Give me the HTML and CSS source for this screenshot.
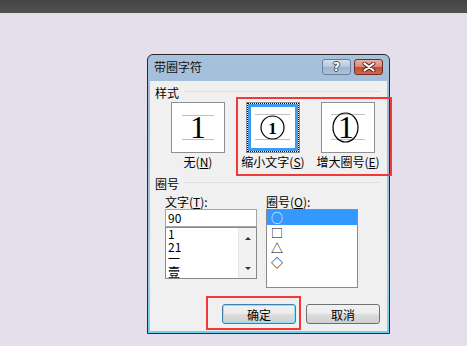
FILE: index.html
```html
<!DOCTYPE html>
<html lang="zh-CN">
<head>
    <meta charset="UTF-8">
    <meta name="viewport" content="width=device-width, initial-scale=1.0">
    <title>带圈字符</title>
    <link rel="stylesheet" href="styles.css">
</head>
<body>
    <div class="topbar"></div>

    <div class="stage">
        <div class="dialog">
            <div class="titlebar">
                <span class="title">带圈字符</span>
                <div class="caption-buttons">
                    <span class="cap-btn help">?</span>
                    <span class="cap-btn close">
                        <svg width="14" height="10" viewBox="0 0 14 10">
                            <path d="M2.5 1.5 L11.5 8.5 M11.5 1.5 L2.5 8.5" stroke="#5a2018" stroke-width="4" stroke-linecap="round"/>
                            <path d="M2.5 1.5 L11.5 8.5 M11.5 1.5 L2.5 8.5" stroke="#fff" stroke-width="2.2" stroke-linecap="round"/>
                        </svg>
                    </span>
                </div>
            </div>

            <div class="client">
                <div class="group-head">
                    <span>样式</span>
                    <i class="rule"></i>
                </div>

                <div class="styles">
                    <div class="style-opt">
                        <div class="style-box">
                            <svg width="52" height="49" viewBox="0 0 52 49">
                                <line x1="10" y1="12.5" x2="42" y2="12.5" stroke="#c0c0c0"/>
                                <line x1="10" y1="36.5" x2="42" y2="36.5" stroke="#c0c0c0"/>
                                <text x="26" y="35" text-anchor="middle" class="digit">1</text>
                            </svg>
                        </div>
                        <span class="opt-label">无(<u>N</u>)</span>
                    </div>
                    <div class="style-opt">
                        <div class="style-box selected">
                            <svg width="52" height="49" viewBox="0 0 52 49">
                                <rect x="2.5" y="2.5" width="47" height="44" fill="none" stroke="#3d9bef" stroke-width="3"/>
                                <line x1="8" y1="11.5" x2="43" y2="11.5" stroke="#c0c0c0"/>
                                <line x1="8" y1="36.5" x2="43" y2="36.5" stroke="#c0c0c0"/>
                                <circle cx="25.5" cy="24.5" r="11.5" fill="none" stroke="#000" stroke-width="1.2"/>
                                <text x="25.5" y="30.5" text-anchor="middle" class="digit small">1</text>
                            </svg>
                        </div>
                        <span class="opt-label">缩小文字(<u>S</u>)</span>
                    </div>
                    <div class="style-opt">
                        <div class="style-box">
                            <svg width="52" height="49" viewBox="0 0 52 49">
                                <line x1="9" y1="11.5" x2="43" y2="11.5" stroke="#c0c0c0"/>
                                <line x1="9" y1="36.5" x2="43" y2="36.5" stroke="#c0c0c0"/>
                                <ellipse cx="23.5" cy="24.5" rx="12.5" ry="14.5" fill="none" stroke="#000" stroke-width="1.2"/>
                                <text x="24" y="35" text-anchor="middle" class="digit">1</text>
                            </svg>
                        </div>
                        <span class="opt-label">增大圈号(<u>E</u>)</span>
                    </div>
                </div>

                <div class="group-head second">
                    <span>圈号</span>
                    <i class="rule"></i>
                </div>

                <div class="pickers">
                    <div class="picker">
                        <span class="field-label">文字(<u>T</u>):</span>
                        <div class="text-input">90</div>
                        <div class="listbox short">
                            <ul>
                                <li>1</li>
                                <li>21</li>
                                <li>一</li>
                                <li>壹</li>
                            </ul>
                            <div class="scrollbar">
                                <span class="arrow up"></span>
                                <span class="arrow down"></span>
                            </div>
                        </div>
                    </div>
                    <div class="picker">
                        <span class="field-label">圈号(<u>O</u>):</span>
                        <div class="listbox tall">
                            <ul>
                                <li class="selected">○</li>
                                <li>□</li>
                                <li>△</li>
                                <li>◇</li>
                            </ul>
                        </div>
                    </div>
                </div>

                <div class="actions">
                    <button class="btn default">确定</button>
                    <button class="btn">取消</button>
                </div>
            </div>
        </div>
    </div>

    <div class="mark mark-styles"></div>
    <div class="mark mark-ok"></div>
</body>
</html>
```

FILE: styles.css
```css
body {
    margin: 0;
    background-color: #e4dfeb;
    font-family: "Noto Sans CJK SC", "DejaVu Sans", sans-serif;
    font-size: 12px;
    color: #000;
}
.topbar {
    height: 13px;
    background: linear-gradient(#444, #525252);
}
.stage {
    padding: 41px 0 0 147px;
}
.dialog {
    width: 241px;
    height: 278px;
    border: 1px solid #2a2a2a;
    border-radius: 6px 6px 0 0;
    background: linear-gradient(#a8c2dd, #9dbad7 20%, #a3cbe4 80%, #6fd0ee);
    display: flex;
    flex-direction: column;
}
.titlebar {
    height: 26px;
    display: flex;
    justify-content: space-between;
    align-items: flex-start;
    padding: 4px 6px 0 6px;
    box-sizing: border-box;
}
.title {
    line-height: 16px;
    color: #111;
}
.caption-buttons {
    display: flex;
    gap: 3px;
}
.cap-btn {
    width: 27px;
    height: 14px;
    border-radius: 3px;
    display: flex;
    align-items: center;
    justify-content: center;
}
.help {
    border: 1px solid #65809f;
    background: linear-gradient(#d3e0ee, #b3c7de 50%, #9cb3cf 51%, #adc3dc);
    color: #fff;
    font-family: "DejaVu Sans", sans-serif;
    font-weight: bold;
    font-size: 12px;
    text-shadow: 1px 0 #3d4f66, -1px 0 #3d4f66, 0 1px #3d4f66, 0 -1px #3d4f66;
}
.close {
    border: 1px solid #6e2c22;
    background: linear-gradient(#e8b3a6, #d98572 50%, #c14a33 51%, #cf6a50);
}
.client {
    margin: 0 2px 2px 2px;
    flex: 1;
    background-color: #f0f0f0;
}
.group-head {
    display: flex;
    margin-top: 5px;
    padding-left: 5px;
    line-height: 14px;
}
.group-head.second {
    margin-top: 8px;
}
.rule {
    flex: 1;
    height: 1px;
    margin: 5px 7px 0 6px;
    background-color: #d5dfe5;
}
.styles {
    display: flex;
    gap: 21px;
    padding-left: 21px;
    margin-top: 2px;
}
.style-opt {
    width: 54px;
    display: flex;
    flex-direction: column;
    align-items: center;
}
.style-box {
    width: 52px;
    height: 49px;
    border: 1px solid #8f8f8f;
    background-color: #fff;
}
.style-box svg {
    display: block;
}
.style-box.selected {
    outline: 1px dotted #000;
    outline-offset: -2px;
}
.digit {
    font-family: "Liberation Serif", serif;
    font-size: 32px;
}
.digit.small {
    font-size: 17px;
    font-weight: bold;
}
.opt-label {
    white-space: nowrap;
    margin-top: 2px;
    line-height: 14px;
}
.pickers {
    display: flex;
    gap: 9px;
    padding-left: 15px;
    margin-top: 4px;
}
.picker {
    width: 92px;
    display: flex;
    flex-direction: column;
}
.field-label {
    line-height: 14px;
}
.text-input {
    height: 16px;
    border: 1px solid #a5a5a5;
    background-color: #fff;
    padding-left: 2px;
    line-height: 16px;
}
.listbox {
    border: 1px solid #8a8a8a;
    background-color: #fff;
    display: flex;
    box-sizing: border-box;
}
.listbox.short {
    height: 52px;
}
.listbox.tall {
    height: 79px;
}
.listbox ul {
    list-style-type: none;
    margin: 0;
    padding: 0;
    flex: 1;
}
.short li {
    line-height: 12.5px;
    padding-left: 2px;
}
.tall li {
    line-height: 15px;
    padding-left: 4px;
}
.tall li.selected {
    background-color: #3399ff;
    color: #fff;
}
.scrollbar {
    width: 17px;
    background-color: #f2f2f2;
    border-left: 1px solid #e6e6e6;
    display: flex;
    flex-direction: column;
    justify-content: space-between;
    align-items: center;
    padding: 9px 0 8px;
}
.arrow {
    width: 0;
    height: 0;
    border-left: 3px solid transparent;
    border-right: 3px solid transparent;
}
.arrow.up {
    border-bottom: 3px solid #333;
}
.arrow.down {
    border-top: 3px solid #333;
}
.actions {
    display: flex;
    justify-content: flex-end;
    gap: 10px;
    padding-right: 7px;
    margin-top: 16px;
}
.btn {
    width: 74px;
    height: 20px;
    padding: 0;
    font-family: inherit;
    font-size: 12px;
    color: #000;
    border: 1px solid #707070;
    border-radius: 3px;
    background: linear-gradient(#f2f2f2, #ebebeb 50%, #dddddd 51%, #cfcfcf);
}
.btn.default {
    border-color: #3c7fb1;
    box-shadow: inset 0 0 0 1px #8fe0f7;
}
.mark {
    position: absolute;
    border: 2px solid #f03a3a;
    box-sizing: border-box;
}
.mark-styles {
    left: 236px;
    top: 97px;
    width: 156px;
    height: 79px;
}
.mark-ok {
    left: 206px;
    top: 296px;
    width: 95px;
    height: 34px;
}
```
